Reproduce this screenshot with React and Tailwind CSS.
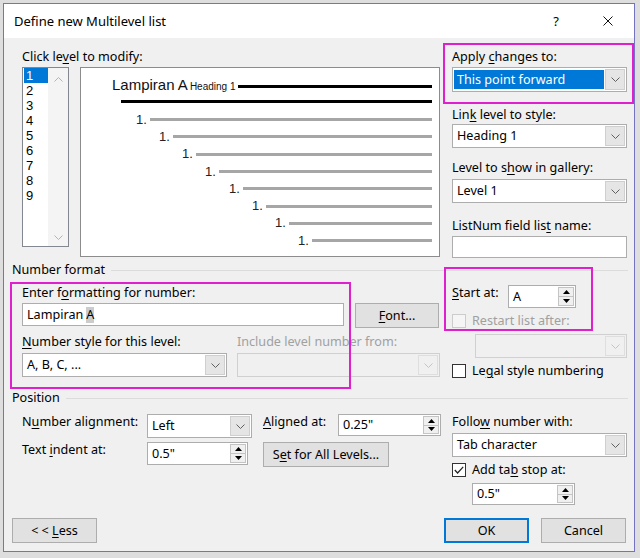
import React from "react"

const U = ({ children }) => <span className="underline underline-offset-[2px] decoration-1">{children}</span>

function Chevron({ up = false, className = "" }) {
    return (
        <svg width="9" height="5" viewBox="0 0 9 5" className={className}>
            <polyline points={up ? "0.5,4.5 4.5,0.5 8.5,4.5" : "0.5,0.5 4.5,4.5 8.5,0.5"} fill="none" stroke="currentColor" strokeWidth="1" />
        </svg>
    )
}

function Select({ value, className = "", disabled = false, highlight = false }) {
    return (
        <div className={`flex border ${disabled ? "border-[#d0d0d0] bg-[#f0f0f0]" : "border-[#adadad] bg-white"} ${className}`}>
            <div className="flex-1 flex items-center min-w-0">
                {highlight ? (
                    <span className="ml-[1px] mr-[1px] my-[2px] self-stretch flex-1 flex items-center bg-[#0078d7] text-white pl-[3px]">{value}</span>
                ) : (
                    <span className="pl-[4px]">{value}</span>
                )}
            </div>
            <div className={`w-[20px] my-[1px] mr-[1px] flex items-center justify-center border ${disabled ? "border-[#dedede] text-[#c4c4c4]" : "border-[#cfcfcf] bg-[#e5e5e5] text-[#606060]"}`}>
                <Chevron />
            </div>
        </div>
    )
}

function Spinner({ value, className = "" }) {
    return (
        <div className={`flex bg-white border border-[#adadad] ${className}`}>
            <span className="flex-1 pl-[4px] flex items-center">{value}</span>
            <div className="my-[1px] mr-[1px] w-[16px] border border-[#c4c4c4] bg-[#f0f0f0] flex flex-col">
                <div className="flex-1 flex items-center justify-center border-b border-[#c4c4c4]">
                    <svg width="7" height="4" viewBox="0 0 7 4"><polygon points="0,4 3.5,0 7,4" fill="#000" /></svg>
                </div>
                <div className="flex-1 flex items-center justify-center">
                    <svg width="7" height="4" viewBox="0 0 7 4"><polygon points="0,0 3.5,4 7,0" fill="#000" /></svg>
                </div>
            </div>
        </div>
    )
}

function Checkbox({ checked = false, disabled = false }) {
    return (
        <div className={`w-[14px] h-[14px] border flex items-center justify-center ${disabled ? "border-[#cccccc] bg-[#f5f5f5]" : "border-[#333333] bg-white"}`}>
            {checked && (
                <svg width="10" height="8" viewBox="0 0 10 8">
                    <polyline points="0.8,4 3.6,7 9.2,0.8" fill="none" stroke="#222" strokeWidth="1.2" />
                </svg>
            )}
        </div>
    )
}

function Button({ children, className = "", primary = false }) {
    return (
        <div className={`flex items-center justify-center bg-[#e1e1e1] ${primary ? "border-2 border-[#0078d7]" : "border border-[#adadad]"} ${className}`}>
            <span>{children}</span>
        </div>
    )
}

function LevelList() {
    const levels = [1, 2, 3, 4, 5, 6, 7, 8, 9]
    return (
        <div className="w-[47px] h-[180px] border border-[#828790] bg-white flex">
            <div className="w-[25px] flex flex-col font-['Liberation_Sans',sans-serif] text-[13px] leading-[15px]">
                {levels.map((n) => (
                    <div key={n} className={n === 1 ? "ml-[1px] h-[15px] pl-[2px] bg-[#0078d7] text-white" : "ml-[1px] h-[15px] pl-[2px]"}>{n}</div>
                ))}
            </div>
            <div className="flex-1 bg-[#f4f4f4] flex flex-col items-center justify-between pt-[9px] pb-[6px] text-[#b4b4b4]">
                <Chevron up />
                <Chevron />
            </div>
        </div>
    )
}

function Preview() {
    const rows = ["pl-[55px]", "pl-[78px]", "pl-[101px]", "pl-[124px]", "pl-[148px]", "pl-[171px]", "pl-[194px]", "pl-[217px]"]
    return (
        <div className="ml-[11px] w-[360px] h-[190px] border border-[#8c8c8c] bg-white flex flex-col pr-[7px] font-['Liberation_Sans',sans-serif]">
            <div className="mt-[8px] h-[20px] flex items-center pl-[31px]">
                <span className="leading-[20px] text-[#111]">
                    <span className="text-[15px]">Lampiran A</span>
                    <span className="ml-[2px] text-[10px]">Heading 1</span>
                </span>
                <div className="ml-[3px] flex-1 h-[3px] bg-black" />
            </div>
            <div className="mt-[4px] ml-[40px] h-[3px] bg-black" />
            <div className="mt-[8px] flex flex-col">
                {rows.map((pl, i) => (
                    <div key={i} className={`h-[17.3px] flex items-center ${pl}`}>
                        <span className="text-[13px] leading-[14px] text-[#222]">1.</span>
                        <div className="ml-[3px] flex-1 h-[3px] bg-[#a6a6a6]" />
                    </div>
                ))}
            </div>
        </div>
    )
}

export default function App() {
    return (
        <div className="relative w-[640px] h-[558px] bg-[#dedede] pt-[3px] pl-[3px] font-['Noto_Sans',sans-serif] text-[12.6px] leading-[16px] text-black">
            <div className="w-[632px] h-[549px] border border-[#7373c2] bg-[#f0f0f0] flex flex-col">
                {/* title bar */}
                <div className="h-[34px] shrink-0 bg-white flex items-center">
                    <span className="ml-[10px] text-[13px]">Define new Multilevel list</span>
                    <span className="ml-auto text-[13px]">?</span>
                    <svg width="10" height="10" viewBox="0 0 10 10" className="ml-[44px] mr-[21px]">
                        <line x1="0.5" y1="0.5" x2="9.5" y2="9.5" stroke="#111" strokeWidth="1" />
                        <line x1="9.5" y1="0.5" x2="0.5" y2="9.5" stroke="#111" strokeWidth="1" />
                    </svg>
                </div>

                <div className="flex flex-col pl-[8px]">
                    {/* levels + preview + right column */}
                    <div className="h-[220px] flex items-start">
                        <div className="ml-[10px] w-[418px] flex flex-col">
                            <div className="mt-[11px]">Click le<U>v</U>el to modify:</div>
                            <div className="mt-[2px] flex items-start">
                                <LevelList />
                                <Preview />
                            </div>
                        </div>
                        <div className="ml-[12px] w-[175px] flex flex-col">
                            <div className="mt-[11px]">Apply <U>c</U>hanges to:</div>
                            <Select highlight value="This point forward" className="mt-[2px] w-[175px] h-[25px]" />
                            <div className="mt-[15px]">Lin<U>k</U> level to style:</div>
                            <Select value="Heading 1" className="mt-[1px] w-[175px] h-[24px]" />
                            <div className="mt-[12px]">Level to s<U>h</U>ow in gallery:</div>
                            <Select value="Level 1" className="mt-[3px] w-[175px] h-[24px]" />
                            <div className="mt-[15px]">ListNum field lis<U>t</U> name:</div>
                            <div className="mt-[2px] w-[175px] h-[22px] bg-white border border-[#adadad]" />
                        </div>
                    </div>

                    {/* Number format */}
                    <div className="mt-[4px] h-[16px] flex items-center">
                        <span>Number format</span>
                        <div className="ml-[6px] mr-[6px] flex-1 h-px bg-[#dcdcdc]" />
                    </div>
                    <div className="flex items-start">
                        <div className="ml-[10px] w-[418px] flex flex-col">
                            <div className="mt-[7px]">Enter f<U>o</U>rmatting for number:</div>
                            <div className="mt-[2px] flex items-start">
                                <div className="w-[322px] h-[23px] bg-white border border-[#adadad] flex items-center pl-[4px]">
                                    Lampiran <span className="ml-[3px] bg-[#cccccc]">A</span>
                                </div>
                                <Button className="ml-[11px] w-[84px] h-[25px]"><U>F</U>ont...</Button>
                            </div>
                            <div className="mt-[6px] flex items-start">
                                <div className="w-[205px] flex flex-col">
                                    <div><U>N</U>umber style for this level:</div>
                                    <Select value="A, B, C, ..." className="mt-[3px] w-[205px] h-[24px]" />
                                </div>
                                <div className="ml-[10px] w-[203px] flex flex-col">
                                    <div className="text-[#a0a0a0]">Include level number from:</div>
                                    <Select disabled className="mt-[3px] w-[203px] h-[24px]" />
                                </div>
                            </div>
                        </div>
                        <div className="ml-[12px] w-[175px] flex flex-col">
                            <div className="mt-[7px] flex items-start">
                                <span className="w-[56px]"><U>S</U>tart at:</span>
                                <Spinner value="A" className="w-[68px] h-[23px]" />
                            </div>
                            <div className="mt-[6px] h-[14px] flex items-center">
                                <Checkbox disabled />
                                <span className="ml-[6px] text-[#a0a0a0]">Restart list after:</span>
                            </div>
                            <Select disabled className="mt-[6px] ml-[23px] w-[152px] h-[24px]" />
                            <div className="mt-[6px] h-[14px] flex items-center">
                                <Checkbox />
                                <span className="ml-[6px]">Le<U>g</U>al style numbering</span>
                            </div>
                        </div>
                    </div>

                    {/* Position */}
                    <div className="mt-[12px] h-[16px] flex items-center">
                        <span>Position</span>
                        <div className="ml-[6px] mr-[6px] flex-1 h-px bg-[#dcdcdc]" />
                    </div>
                    <div className="flex items-start">
                        <div className="ml-[10px] w-[419px] flex flex-col">
                            <div className="mt-[8px] flex items-start">
                                <span className="w-[125px]">N<U>u</U>mber alignment:</span>
                                <Select value="Left" className="w-[105px] h-[24px]" />
                                <span className="ml-[11px] w-[75px]"><U>A</U>ligned at:</span>
                                <Spinner value={'0.25"'} className="w-[103px] h-[22px]" />
                            </div>
                            <div className="mt-[4px] flex items-start">
                                <span className="w-[125px]">Text <U>i</U>ndent at:</span>
                                <Spinner value={'0.5"'} className="w-[101px] h-[23px]" />
                                <Button className="ml-[15px] w-[126px] h-[25px]">S<U>e</U>t for All Levels...</Button>
                            </div>
                        </div>
                        <div className="ml-[11px] w-[175px] flex flex-col">
                            <div className="mt-[8px]">Follo<U>w</U> number with:</div>
                            <Select value="Tab character" className="mt-[3px] w-[175px] h-[24px]" />
                            <div className="mt-[5px] h-[15px] flex items-center">
                                <Checkbox checked />
                                <span className="ml-[6px]">Add ta<U>b</U> stop at:</span>
                            </div>
                            <Spinner value={'0.5"'} className="mt-[6px] ml-[20px] w-[103px] h-[22px]" />
                        </div>
                    </div>

                    {/* buttons */}
                    <div className="mt-[13px] flex">
                        <Button className="w-[85px] h-[25px]">{"< < "}<U>L</U>ess</Button>
                        <Button primary className="ml-[347px] w-[85px] h-[25px]">OK</Button>
                        <Button className="ml-[12px] w-[85px] h-[25px]">Cancel</Button>
                    </div>
                </div>
            </div>

            {/* highlight annotations drawn over the dialog */}
            <div className="absolute left-[443px] top-[43px] w-[191px] h-[61px] border-2 border-[#e01fce]" />
            <div className="absolute left-[10px] top-[282px] w-[341px] h-[107px] border-2 border-[#e01fce]" />
            <div className="absolute left-[444px] top-[267px] w-[149px] h-[64px] border-2 border-[#e01fce]" />
        </div>
    )
}
